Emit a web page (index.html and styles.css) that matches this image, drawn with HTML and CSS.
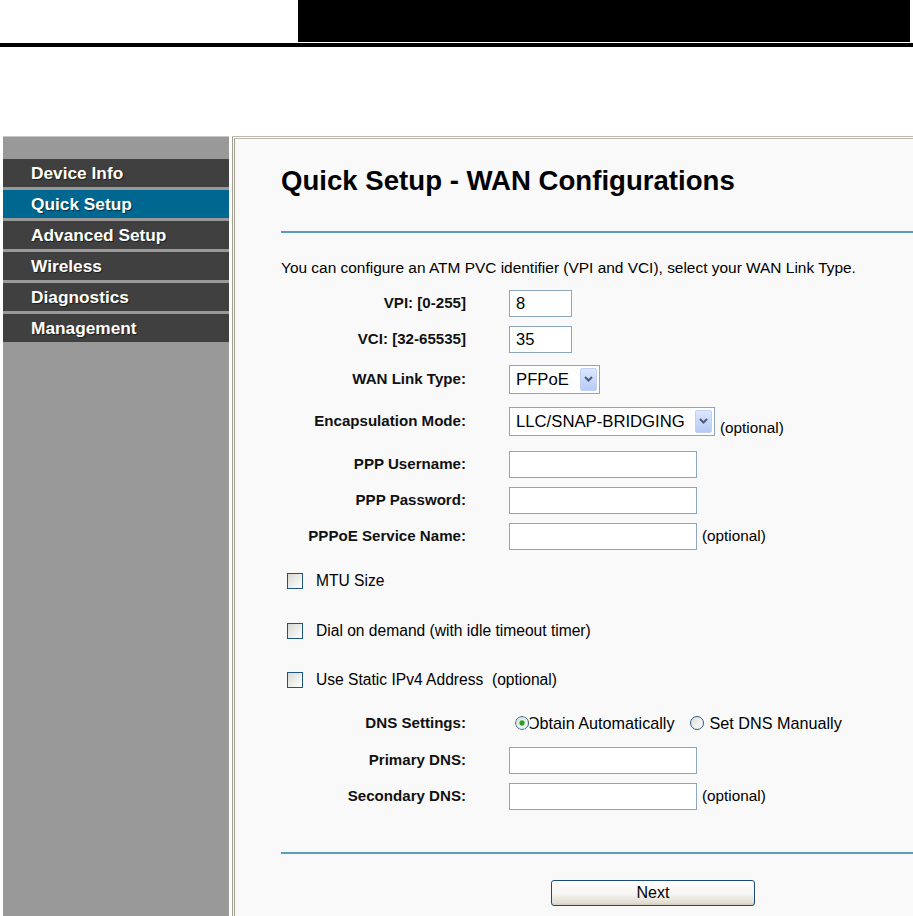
FILE: index.html
```html
<!DOCTYPE html>
<html>
<head>
<meta charset="utf-8">
<title>Quick Setup - WAN Configurations</title>
<link rel="stylesheet" href="styles.css">
</head>
<body>
<header class="top">
  <div class="bar"></div>
  <div class="rule-black"></div>
</header>
<div class="frame">
  <nav class="side">
    <a class="item">Device Info</a>
    <a class="item active">Quick Setup</a>
    <a class="item">Advanced Setup</a>
    <a class="item">Wireless</a>
    <a class="item">Diagnostics</a>
    <a class="item">Management</a>
  </nav>
  <main class="content">
    <h1 class="title">Quick Setup - WAN Configurations</h1>
    <div class="blue-rule"></div>
    <p class="intro">You can configure an ATM PVC identifier (VPI and VCI), select your WAN Link Type.</p>

    <div class="row">
      <label class="lbl">VPI: [0-255]</label>
      <div class="field"><input class="txt short" type="text" value="8"></div>
    </div>
    <div class="row">
      <label class="lbl">VCI: [32-65535]</label>
      <div class="field"><input class="txt short" type="text" value="35"></div>
    </div>
    <div class="row mt4">
      <label class="lbl">WAN Link Type:</label>
      <div class="field">
        <span class="select sel-wan">
          <select class="sel"><option>PFPoE</option></select>
          <span class="arrow"><svg width="9" height="6" viewBox="0 0 9 6"><path d="M1 1l3.5 3.5L8 1" stroke="#4a5d80" stroke-width="2" fill="none"/></svg></span>
        </span>
      </div>
    </div>
    <div class="row mt6">
      <label class="lbl">Encapsulation Mode:</label>
      <div class="field">
        <span class="select sel-encap">
          <select class="sel"><option>LLC/SNAP-BRIDGING</option></select>
          <span class="arrow"><svg width="9" height="6" viewBox="0 0 9 6"><path d="M1 1l3.5 3.5L8 1" stroke="#4a5d80" stroke-width="2" fill="none"/></svg></span>
        </span>
        <span class="opt low">(optional)</span>
      </div>
    </div>
    <div class="row mt7">
      <label class="lbl">PPP Username:</label>
      <div class="field"><input class="txt" type="text"></div>
    </div>
    <div class="row">
      <label class="lbl">PPP Password:</label>
      <div class="field"><input class="txt" type="password"></div>
    </div>
    <div class="row">
      <label class="lbl">PPPoE Service Name:</label>
      <div class="field"><input class="txt" type="text"><span class="opt">(optional)</span></div>
    </div>

    <label class="check mt9"><input class="cb" type="checkbox">MTU Size</label>
    <label class="check mt14"><input class="cb" type="checkbox">Dial on demand (with idle timeout timer)</label>
    <label class="check mt13"><input class="cb" type="checkbox">Use Static IPv4 Address&nbsp; (optional)</label>

    <div class="row mt7">
      <label class="lbl">DNS Settings:</label>
      <div class="field radios">
        <label class="radio"><input class="rb" type="radio" name="dns" checked>Obtain Automatically</label>
        <label class="radio second"><input class="rb" type="radio" name="dns">Set DNS Manually</label>
      </div>
    </div>
    <div class="row mt1">
      <label class="lbl">Primary DNS:</label>
      <div class="field"><input class="txt" type="text"></div>
    </div>
    <div class="row">
      <label class="lbl">Secondary DNS:</label>
      <div class="field"><input class="txt" type="text"><span class="opt">(optional)</span></div>
    </div>

    <div class="blue-rule bottom"></div>
    <button class="next" type="button">Next</button>
  </main>
</div>
</body>
</html>
```

FILE: styles.css
```css
html, body {
  margin: 0;
  padding: 0;
  background: #ffffff;
  overflow: hidden;
}
body {
  width: 913px;
  height: 916px;
  font-family: "Liberation Sans", Arial, sans-serif;
  color: #000;
}

/* header */
.top {
  height: 48px;
}
.bar {
  margin-left: 298px;
  width: 612px;
  height: 42px;
  background: #000;
}
.rule-black {
  margin-top: 1px;
  height: 4px;
  background: #000;
}

/* frame */
.frame {
  margin-top: 88px;
  display: flex;
  height: 780px;
  padding-left: 3px;
}

/* sidebar */
.side {
  width: 226px;
  flex: none;
  box-sizing: border-box;
  background: #999999;
  border-top: 1px solid #c8c6c0;
  padding-top: 22px;
}
.item {
  display: block;
  height: 28px;
  line-height: 28px;
  margin-bottom: 3px;
  padding-left: 28px;
  background: #404040;
  color: #fff;
  font-weight: bold;
  font-size: 17.3px;
  text-shadow: 1px 1px 1px rgba(0, 0, 0, 0.55);
  white-space: nowrap;
}
.item.active {
  background: #006791;
}

/* content */
.content {
  flex: 1;
  margin-left: 3px;
  border-left: 3px double #a39f93;
  border-top: 3px double #bdb9ad;
  background: #f9f9f9;
  padding: 26px 0 0 46px;
  min-width: 0;
}
.title {
  margin: 0;
  font-size: 27.6px;
  line-height: 32px;
  font-weight: bold;
  white-space: nowrap;
}
.blue-rule {
  margin-top: 34px;
  height: 2px;
  background: #5b9bc2;
}
.blue-rule.bottom {
  margin-top: 38px;
}
.intro {
  margin: 26px 0 8px;
  font-size: 15.45px;
  line-height: 18px;
  white-space: nowrap;
}

/* form rows */
.row {
  display: grid;
  grid-template-columns: 185px 1fr;
  column-gap: 43px;
  align-items: center;
  height: 36px;
}
.lbl {
  text-align: right;
  font-weight: bold;
  font-size: 15.1px;
  line-height: 18px;
  white-space: nowrap;
  color: #111;
}
.field {
  display: flex;
  align-items: center;
  gap: 5px;
  height: 100%;
}
.mt1 { margin-top: 1px; }
.mt4 { margin-top: 4px; }
.mt6 { margin-top: 6px; }
.mt7 { margin-top: 7px; }
.mt9 { margin-top: 9px; }
.mt13 { margin-top: 13px; }
.mt14 { margin-top: 14px; }

.txt {
  box-sizing: border-box;
  width: 188px;
  height: 27px;
  margin: 0;
  padding: 0 6px;
  border: 1px solid #8ea6bd;
  background: #fff;
  font-family: "Liberation Sans", Arial, sans-serif;
  font-size: 16.5px;
  color: #000;
  outline: none;
}
.txt.short {
  width: 63px;
}

.select {
  display: inline-flex;
  align-items: stretch;
  box-sizing: border-box;
  height: 29px;
  border: 1px solid #8ea6bd;
  background: #fff;
  padding: 2px 2px 2px 0;
}
.sel-wan { width: 91px; }
.sel-encap { width: 206px; }
.sel {
  flex: 1;
  min-width: 0;
  appearance: none;
  -webkit-appearance: none;
  border: 0;
  margin: 0;
  padding: 0 0 0 6px;
  background: transparent;
  font-family: "Liberation Sans", Arial, sans-serif;
  font-size: 16.7px;
  color: #000;
  outline: none;
}
.arrow {
  flex: none;
  width: 17px;
  box-sizing: border-box;
  border: 1px solid #c0d0f8;
  border-radius: 2px;
  background: linear-gradient(#dde7fe, #b7caf6);
  display: flex;
  align-items: center;
  justify-content: center;
}

.opt {
  font-size: 15.3px;
  line-height: 18px;
  white-space: nowrap;
}
.opt.low {
  align-self: flex-end;
  margin-bottom: 2px;
}

/* checkboxes */
.check {
  display: flex;
  align-items: center;
  height: 36px;
  padding-left: 6px;
  font-size: 15.6px;
  white-space: nowrap;
}
.cb {
  appearance: none;
  -webkit-appearance: none;
  box-sizing: border-box;
  width: 16px;
  height: 16px;
  margin: 0 13px 0 0;
  border: 1px solid #1f5382;
  background: linear-gradient(135deg, #d8d8d2, #f4f4f2 70%, #ffffff);
}

/* radios */
.radios {
  gap: 0;
  padding-left: 6px;
  font-size: 16.2px;
  white-space: nowrap;
}
.radio {
  display: flex;
  align-items: center;
}
.radio.second {
  margin-left: 15px;
}
.rb {
  appearance: none;
  -webkit-appearance: none;
  position: relative;
  z-index: 1;
  box-sizing: border-box;
  width: 14px;
  height: 14px;
  margin: 0 -2px 0 0;
  border: 1px solid #2f5f8c;
  border-radius: 50%;
  outline: 2px solid #f9f9f9;
  background: linear-gradient(135deg, #dcdcd6, #ffffff);
}
.rb:checked {
  background: radial-gradient(circle, #25a325 0 2.4px, #8fd48f 2.6px, transparent 3.4px), linear-gradient(135deg, #dcdcd6, #ffffff);
}
.radio.second .rb {
  margin-right: 6px;
  outline: none;
}

/* next button */
.next {
  display: block;
  margin: 26px 0 0 270px;
  width: 204px;
  height: 26px;
  box-sizing: border-box;
  border: 1px solid #1d4a78;
  border-radius: 3px;
  background: linear-gradient(#ffffff, #f5f4f0 55%, #e2ded4 90%, #d2cdc0);
  font-family: "Liberation Sans", Arial, sans-serif;
  font-size: 16px;
  color: #000;
  padding: 0;
}
```
